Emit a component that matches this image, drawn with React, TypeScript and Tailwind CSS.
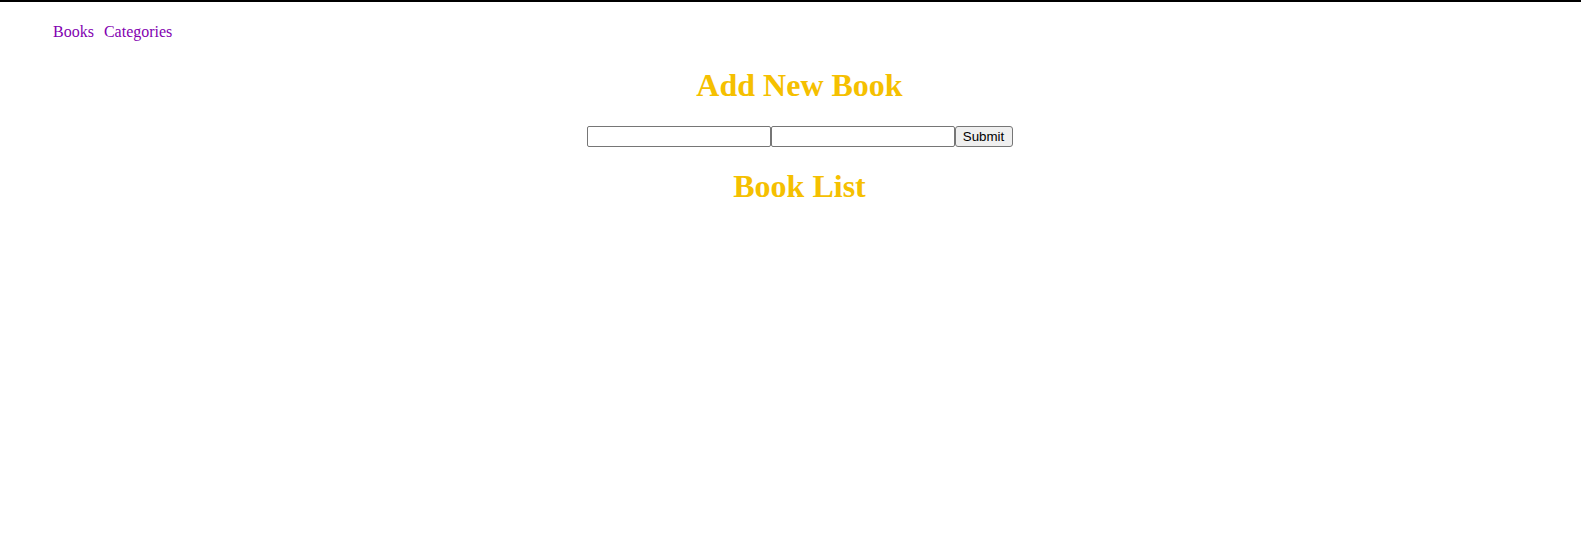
import React from "react";

export default function App() {
  return (
    <div className="min-h-[545px] bg-white border-t-2 border-black font-['Liberation_Serif',serif]">
      {/* Nav */}
      <nav className="flex gap-[10px] pl-[53px] pt-[21px] text-[16px] leading-[18px]">
        <a href="#" className="text-[#8200b0]">Books</a>
        <a href="#" className="text-[#8200b0]">Categories</a>
      </nav>

      <div className="pl-[18px] flex flex-col items-center">
        <h2 className="mt-[26px] text-[32px] leading-[37px] font-bold text-[#f5c000]">Add New Book</h2>

        <form className="mt-[22px] flex items-center" onSubmit={(e) => e.preventDefault()}>
          <input
            type="text"
            className="w-[184px] h-[21px] border border-[#767676] rounded-[2px] px-[2px] text-[13px] font-['Liberation_Sans',sans-serif]"
          />
          <input
            type="text"
            className="w-[184px] h-[21px] border border-[#767676] rounded-[2px] px-[2px] text-[13px] font-['Liberation_Sans',sans-serif]"
          />
          <button
            type="submit"
            className="w-[58px] h-[21px] border border-[#767676] rounded-[3px] bg-[#efefef] text-[13.33px] leading-[15px] text-black font-['Liberation_Sans',sans-serif]"
          >
            Submit
          </button>
        </form>

        <h2 className="mt-[21px] text-[32px] leading-[37px] font-bold text-[#f5c000]">Book List</h2>
      </div>
    </div>
  );
}
